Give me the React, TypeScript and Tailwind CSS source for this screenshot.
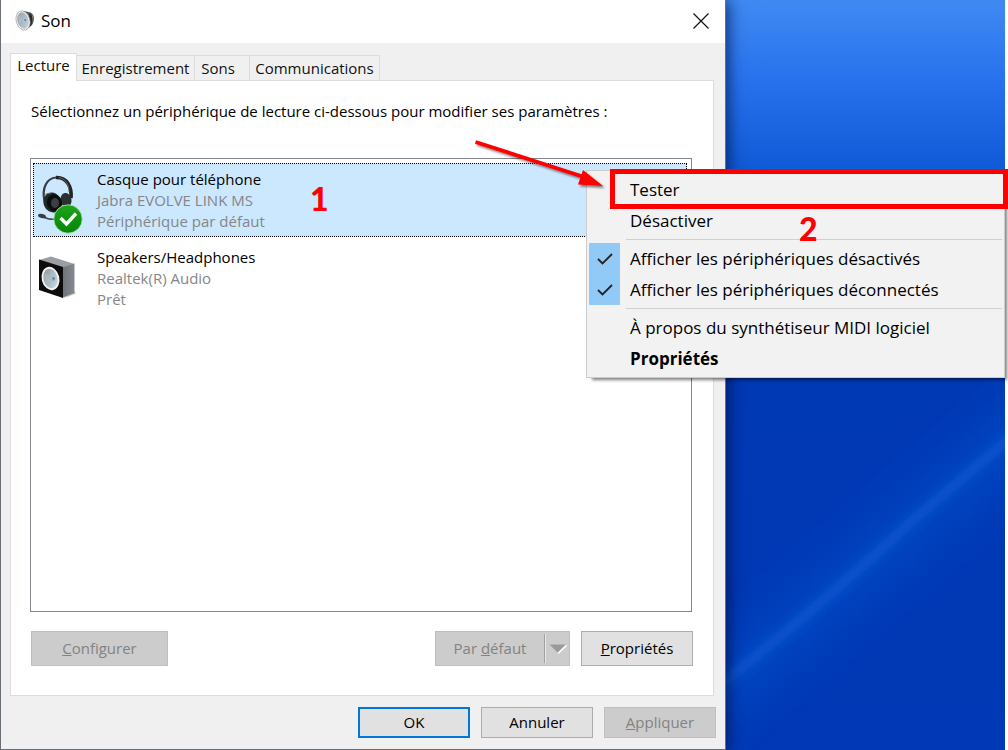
import type { ReactNode } from "react";
import { clsx } from "clsx";

function SoundIcon() {
  return (
    <svg viewBox="0 0 20 22" className="h-[22px] w-5" aria-hidden="true">
      <defs>
        <linearGradient id="cone" x1="0" y1="0" x2="1" y2="1">
          <stop offset="0" stopColor="#8f9ba3" />
          <stop offset="1" stopColor="#c9d8e2" />
        </linearGradient>
      </defs>
      <path d="M9 1 L15.500 2.500 Q19.500 5 19 9 Q18.500 13 17 15 L11 20 Z" fill="#5a5a5a" />
      <path d="M14.500 3 L18 5.500 L16.500 15 L13.500 18 Z" fill="#2a2a2a" />
      <path d="M16.500 4 L18.500 6.500 L18 11 Z" fill="#8a8a8a" />
      <ellipse cx="8" cy="10.500" rx="6.800" ry="9.800" transform="rotate(-16 8 10.500)" fill="#f6f6f6" stroke="#a0a0a0" strokeWidth="0.7" />
      <ellipse cx="8" cy="10.500" rx="5.600" ry="8.400" transform="rotate(-16 8 10.500)" fill="url(#cone)" />
      <path d="M4 5 L9 10 L5 14 Q2 9 4 5 Z" fill="#aebac2" />
      <ellipse cx="9.800" cy="10.500" rx="2" ry="3" fill="#a9c4d4" />
      <circle cx="10.200" cy="10" r="1" fill="#5d8197" />
    </svg>
  );
}

function HeadsetIcon() {
  return (
    <svg viewBox="0 0 48 68" className="h-[68px] w-12" aria-hidden="true">
      <defs>
        <linearGradient id="badge" x1="0" y1="0" x2="0" y2="1">
          <stop offset="0" stopColor="#1fa51f" />
          <stop offset="0.5" stopColor="#0b960b" />
          <stop offset="1" stopColor="#0a860a" />
        </linearGradient>
      </defs>
      <path d="M6.500 35 C3.500 22 9 12 18 11.500 C29 11 34 21 33 32" fill="none" stroke="#3a3d40" strokeWidth="2.200" />
      <path d="M18 11.500 C29 11 34 21 33 32" fill="none" stroke="#222426" strokeWidth="3.600" />
      <path d="M21 11.500 C28 13 31 19 31 26" fill="none" stroke="#75797d" strokeWidth="0.800" />
      <ellipse cx="28" cy="34" rx="5.500" ry="7" transform="rotate(-10 28 34)" fill="#2c2f32" />
      <ellipse cx="14.500" cy="36.500" rx="9" ry="10" transform="rotate(-20 14.500 36.500)" fill="#24272a" />
      <ellipse cx="16.500" cy="37" rx="7.500" ry="8.500" transform="rotate(-20 16.500 37)" fill="#0c0d0e" />
      <ellipse cx="17" cy="37" rx="4" ry="5" fill="#3b3f43" />
      <path d="M6 30 Q8 27 13 27" fill="none" stroke="#6b6f73" strokeWidth="1" />
      <path d="M4 50 Q10 54 18 53" fill="none" stroke="#4b4f53" strokeWidth="1.600" />
      <ellipse cx="4" cy="50" rx="4" ry="2" transform="rotate(15 4 50)" fill="#3a3d40" />
      <circle cx="30" cy="53" r="14.200" fill="url(#badge)" stroke="#b9deb4" strokeWidth="0.800" />
      <path d="M22.500 52 L28.500 58 L38 47.500" fill="none" stroke="#fff" strokeWidth="3.400" />
    </svg>
  );
}

function SpeakerIcon() {
  return (
    <svg viewBox="0 0 40 46" className="h-[46px] w-10" aria-hidden="true">
      <defs>
        <linearGradient id="side" x1="0" y1="0" x2="1" y2="0">
          <stop offset="0" stopColor="#6d7278" />
          <stop offset="1" stopColor="#858a91" />
        </linearGradient>
        <linearGradient id="driver" x1="0" y1="0" x2="1" y2="1">
          <stop offset="0" stopColor="#87939b" />
          <stop offset="1" stopColor="#d4e0e7" />
        </linearGradient>
      </defs>
      <path d="M25 44 L38 38.500 L36 36 Z" fill="#000" opacity="0.2" />
      <path d="M1 5 L13 1.500 L36.500 9 L24 13 Z" fill="#9a9da1" />
      <path d="M24 12.500 L36.500 8.500 V38 L24 43 Z" fill="url(#side)" />
      <path d="M1 4.500 L25 12 V43 L1 35 Z" fill="#0c0c0d" />
      <ellipse cx="12.500" cy="23.500" rx="8.800" ry="11.800" transform="rotate(-14 12.500 23.500)" fill="#f4f4f4" />
      <ellipse cx="12.500" cy="23.500" rx="7" ry="9.800" transform="rotate(-14 12.500 23.500)" fill="url(#driver)" />
      <path d="M7 18 L14 23 L9 29 Q5 23 7 18 Z" fill="#aebcc5" opacity="0.7" />
      <ellipse cx="15" cy="23.500" rx="2.500" ry="3.200" fill="#9fc0d2" />
      <circle cx="15.500" cy="23.500" r="1.200" fill="#587c92" />
    </svg>
  );
}

function Wallpaper() {
  return (
    <svg viewBox="0 0 1005 750" preserveAspectRatio="none" className="absolute inset-0 h-full w-full" aria-hidden="true">
      <defs>
        <linearGradient id="sky" x1="0" y1="0" x2="0" y2="1">
          <stop offset="0" stopColor="#3f8af2" />
          <stop offset="0.1" stopColor="#2973ee" />
          <stop offset="0.23" stopColor="#0f59d6" />
          <stop offset="0.38" stopColor="#0244c0" />
          <stop offset="0.5" stopColor="#0039b4" />
          <stop offset="1" stopColor="#0038b5" />
        </linearGradient>
        <filter id="wide" x="-50%" y="-50%" width="200%" height="200%">
          <feGaussianBlur stdDeviation="22" />
        </filter>
        <filter id="thin" x="-50%" y="-50%" width="200%" height="200%">
          <feGaussianBlur stdDeviation="5" />
        </filter>
      </defs>
      <rect width="1005" height="750" fill="url(#sky)" />
      <path d="M640 760 L1060 400" stroke="#0650cc" strokeOpacity="0.55" strokeWidth="56" filter="url(#wide)" />
      <path d="M660 735 L730 677 Q830 598 913 520 L1060 396" fill="none" stroke="#0a5ad2" strokeOpacity="0.75" strokeWidth="11" filter="url(#thin)" />
    </svg>
  );
}

const tabs = [
  { label: "Enregistrement", width: "w-[118px]" },
  { label: "Sons", width: "w-[55px] pr-2" },
  { label: "Communications", width: "w-[130px]" },
];

type DeviceProps = { icon: ReactNode; name: string; model: string; state: string; selected?: boolean };

function Device({ icon, name, model, state, selected }: DeviceProps) {
  return (
    <li
      role="option"
      aria-selected={!!selected}
      className={clsx(
        "flex h-[74px] border border-dotted",
        selected ? "border-black bg-[#cce8ff]" : "border-transparent",
      )}
    >
      <div className="flex w-[63px] shrink-0 items-center pl-1">{icon}</div>
      <div className="pt-[5px] text-[15px] leading-[21px] text-[#868686]">
        <p className="text-black">{name}</p>
        <p>{model}</p>
        <p>{state}</p>
      </div>
    </li>
  );
}

type ButtonProps = { children: ReactNode; className?: string; disabled?: boolean; primary?: boolean };

function Button({ children, className, disabled, primary }: ButtonProps) {
  return (
    <button
      type="button"
      disabled={disabled}
      className={clsx(
        "flex items-center justify-center text-[15px]",
        disabled && "border border-[#bfbfbf] bg-[#cccccc] text-[#838383]",
        primary && "border-2 border-[#0078d7] bg-[#e1e1e1] text-black",
        !disabled && !primary && "border border-[#adadad] bg-[#e1e1e1] text-black",
        className,
      )}
    >
      <span>{children}</span>
    </button>
  );
}

function MenuItem({ label, checked, bold }: { label: string; checked?: boolean; bold?: boolean }) {
  return (
    <button
      type="button"
      role={checked ? "menuitemcheckbox" : "menuitem"}
      aria-checked={checked}
      className="flex h-[31px] w-full items-center text-left text-[17px] text-black"
    >
      <span className={clsx("flex h-full w-[31px] items-center justify-center", checked && "bg-[#91c9f7]")}>
        {checked && (
          <svg viewBox="0 0 16 12" className="h-3 w-4" aria-hidden="true">
            <path d="M1 6 L5.500 10.500 L15 1" fill="none" stroke="#222" strokeWidth="1.800" />
          </svg>
        )}
      </span>
      <span className={clsx("pl-[10px]", bold && "font-bold")}>{label}</span>
    </button>
  );
}

function Separator() {
  return <div role="separator" className="my-[3px] ml-[37px] h-px bg-[#d0d0d0]" />;
}

export default function App() {
  return (
    <div className="relative min-h-screen bg-white pr-[3px] font-['Open_Sans','Noto_Sans',sans-serif]">
      <div className="relative flex min-h-screen overflow-hidden">
        <Wallpaper />
        <main className="relative flex w-[726px] flex-col border border-t-0 border-[#6a6e75] bg-[#f0f0f0] shadow-[3px_0_14px_rgba(0,10,60,0.65)]">
          <header className="flex h-[43px] items-center justify-between bg-white pr-4 pb-[2px] pl-[14px]">
            <div className="flex items-center gap-[6px]">
              <SoundIcon />
              <h1 className="text-[17px] text-black">Son</h1>
            </div>
            <button type="button" aria-label="Fermer">
              <svg viewBox="0 0 16 16" className="h-4 w-4" aria-hidden="true">
                <path d="M0.500 0.500 L15.500 15.500 M15.500 0.500 L0.500 15.500" stroke="#111" strokeWidth="1.200" />
              </svg>
            </button>
          </header>

          <div className="flex flex-1 flex-col px-[9px] pt-[10px] pb-[11px]">
            <div role="tablist" className="flex items-end text-[15px] text-[#111]">
              <button
                type="button"
                role="tab"
                aria-selected="true"
                className="relative z-10 -mb-px h-[28px] w-[67px] border border-b-0 border-[#dcdcdc] bg-white pb-1"
              >
                Lecture
              </button>
              {tabs.map((tab) => (
                <button
                  key={tab.label}
                  type="button"
                  role="tab"
                  aria-selected="false"
                  className={clsx("h-[25px] border border-b-0 border-l-0 border-[#dcdcdc]", tab.width)}
                >
                  {tab.label}
                </button>
              ))}
            </div>

            <section className="mr-[2px] flex flex-1 flex-col border border-[#dcdcdc] bg-white pt-[19px] pr-5 pb-[29px] pl-5">
              <p className="text-[15px] leading-[22px] text-black">
                Sélectionnez un périphérique de lecture ci-dessous pour modifier ses paramètres :
              </p>
              <ul
                role="listbox"
                aria-label="Périphériques de lecture"
                className="mt-9 mr-px -ml-px flex flex-1 flex-col gap-1 border border-[#828790] py-1 pr-1 pl-[2px]"
              >
                <Device
                  icon={<HeadsetIcon />}
                  name="Casque pour téléphone"
                  model="Jabra EVOLVE LINK MS"
                  state="Périphérique par défaut"
                  selected
                />
                <Device icon={<SpeakerIcon />} name="Speakers/Headphones" model="Realtek(R) Audio" state="Prêt" />
              </ul>
              <div className="mt-[19px] flex gap-[11px]">
                <Button disabled className="mr-auto h-[35px] w-[137px]">
                  <u>C</u>onfigurer
                </Button>
                <div className="flex h-[35px] w-[135px] border border-[#bfbfbf] bg-[#cccccc]">
                  <button type="button" disabled className="flex-1 text-[15px] text-[#838383]">
                    Par <u>d</u>éfaut
                  </button>
                  <div className="my-[2px] w-[2px] border-l border-[#a0a0a0] bg-[#e8e8e8]" />
                  <button
                    type="button"
                    disabled
                    aria-label="Autres choix"
                    className="flex w-[23px] items-center justify-center"
                  >
                    <svg viewBox="0 0 18 10" className="h-[10px] w-[18px]" aria-hidden="true">
                      <path d="M9 9.500 L17.500 1.500" stroke="#fff" strokeWidth="1.500" />
                      <path d="M0.500 0.500 H16.500 L8.500 8.500 Z" fill="#9a9a9a" />
                    </svg>
                  </button>
                </div>
                <Button className="h-[35px] w-[112px]">
                  <u>P</u>ropriétés
                </Button>
              </div>
            </section>

            <footer className="mt-[11px] flex justify-end gap-[11px]">
              <Button primary className="h-[31px] w-[112px]">OK</Button>
              <Button className="h-[31px] w-[112px]">Annuler</Button>
              <Button disabled className="h-[31px] w-[112px]">
                <u>A</u>ppliquer
              </Button>
            </footer>
          </div>
        </main>
      </div>

      <div
        role="menu"
        className="absolute top-[170px] right-[3px] left-[586px] border border-[#cccccc] bg-[#f2f2f2] py-[3px] px-[2px] shadow-[4px_4px_3px_-2px_rgba(0,0,0,0.5)]"
      >
        <MenuItem label="Tester" />
        <MenuItem label="Désactiver" />
        <Separator />
        <MenuItem label="Afficher les périphériques désactivés" checked />
        <MenuItem label="Afficher les périphériques déconnectés" checked />
        <Separator />
        <MenuItem label="À propos du synthétiseur MIDI logiciel" />
        <MenuItem label="Propriétés" bold />
      </div>

      <div className="pointer-events-none absolute top-[169px] right-0 left-[610px] h-10 border-[5px] border-[#fe0000]" />
      <svg viewBox="0 0 136 56" className="pointer-events-none absolute top-[138px] left-[472px] h-14 w-[136px]" aria-hidden="true">
        <defs>
          <filter id="drop" x="-20%" y="-20%" width="150%" height="150%">
            <feDropShadow dx="2" dy="2" stdDeviation="1.2" floodColor="#000" floodOpacity="0.5" />
          </filter>
        </defs>
        <g filter="url(#drop)">
          <path d="M3.500 4 L112 39" stroke="#fe0000" strokeWidth="3.800" />
          <path d="M111 32 L131 48 L106 46.500 Z" fill="#fe0000" />
        </g>
      </svg>
      <span className="absolute top-[179px] left-[310px] font-['Lato',sans-serif] text-[32px] leading-10 font-black text-[#fe0000]">1</span>
      <span className="absolute top-[209px] left-[799px] font-['Lato',sans-serif] text-[32px] leading-10 font-black text-[#fe0000]">2</span>
    </div>
  );
}
